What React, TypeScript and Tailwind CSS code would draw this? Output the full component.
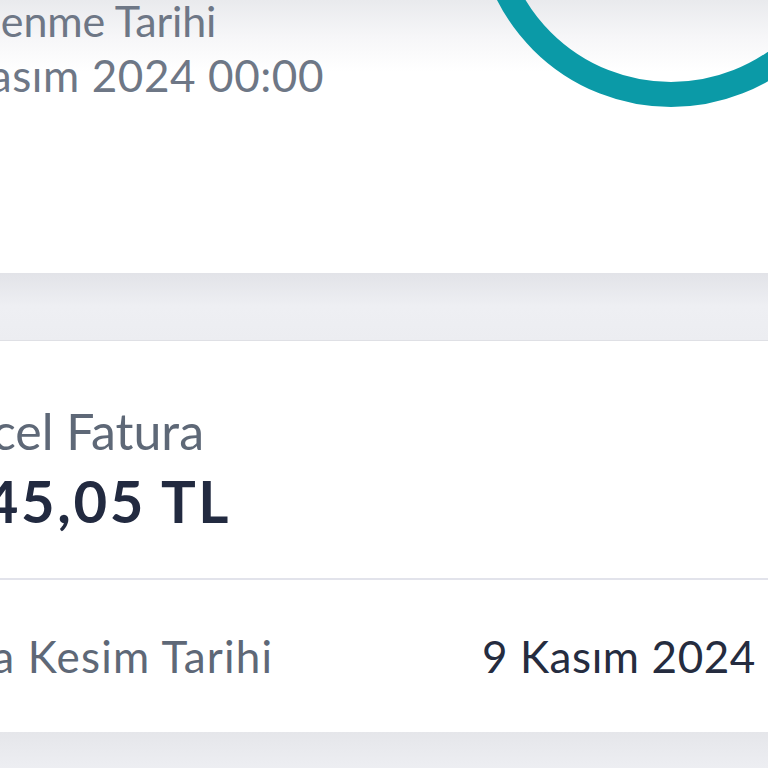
import React from "react";

const FONT = "font-['Lato','Noto_Sans',sans-serif]";

function UsageRing() {
  // teal usage ring, only its lower part shows below the header
  return (
    <svg
      className="pointer-events-none absolute left-[476px] top-[-283px]"
      width={390}
      height={390}
      viewBox="0 0 390 390"
    >
      <circle cx={195} cy={195} r={182.5} fill="none" stroke="#0b9aa7" strokeWidth={25} />
    </svg>
  );
}

export default function App() {
  return (
    <div className={`h-[768px] w-[768px] overflow-hidden bg-[#eceef2] ${FONT}`}>
      {/* ── Package card ── */}
      <section className="relative flow-root h-[273px] bg-[linear-gradient(to_bottom,#e9eaed_0px,#f6f6f8_36px,#ffffff_72px)]">
        <UsageRing />
        <div className="relative -mt-[6px] leading-[54px] text-[#6e7786]">
          <p className="-ml-[88px] text-[43px] tracking-[-0.1px]">Yenilenme Tarihi</p>
          <p className="-ml-[104px] text-[44px] tracking-[0.6px]">10 Kasım 2024 00:00</p>
        </div>
      </section>

      {/* ── Spacer ── */}
      <div className="h-[68px] border-b border-[#dfe0e5] bg-[linear-gradient(to_bottom,#e2e3e8,#eeeff3_50%,#ecedf1)]" />

      {/* ── Invoice card ── */}
      <section className="bg-white">
        <div className="flow-root pb-[48px] pt-[65px]">
          <p className="-ml-[100px] text-[50px] leading-none text-[#5e6877]">Güncel Fatura</p>
          <p className="-ml-[104px] mt-[16px] text-[58px] font-bold leading-none tracking-[2.6px] text-[#222a40]">
            1.345,05 TL
          </p>
        </div>
        <div className="h-[2px] bg-[#e2e3eb]" />
        <div className="flex h-[152px] items-center justify-between pr-3 text-[44px] leading-none">
          <span className="-ml-[113px] tracking-[1.2px] text-[#5e6877]">Fatura Kesim Tarihi</span>
          <span className="tracking-[0.6px] text-[#252c3f]">9 Kasım 2024</span>
        </div>
      </section>

      <div className="h-[40px] bg-[linear-gradient(to_bottom,#e5e6ea,#eeeff3)]" />
    </div>
  );
}
